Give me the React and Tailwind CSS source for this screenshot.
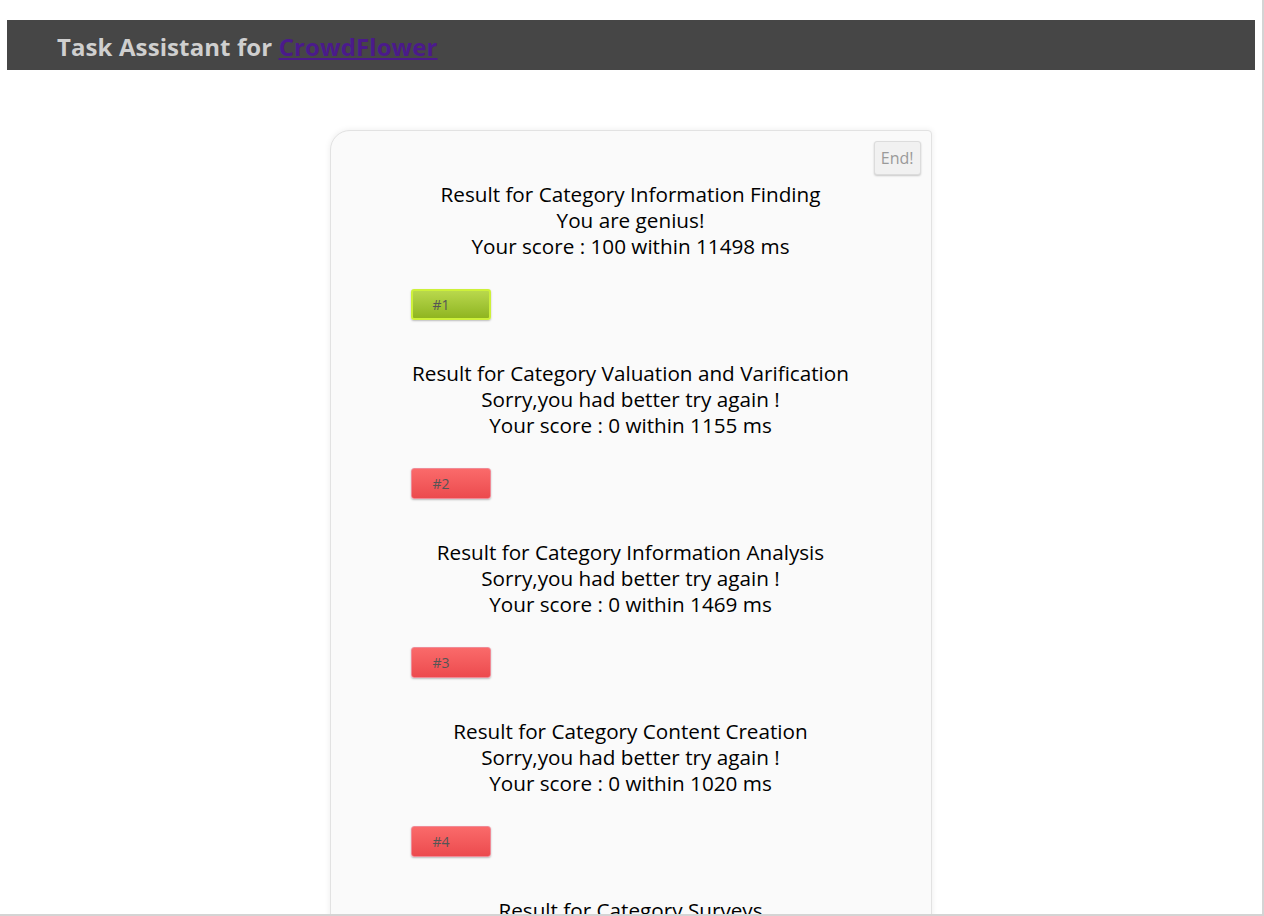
const results = [
  { category: 'Information Finding', message: 'You are genius!', score: 100, time: 11498, passed: true },
  { category: 'Valuation and Varification', message: 'Sorry,you had better try again !', score: 0, time: 1155, passed: false },
  { category: 'Information Analysis', message: 'Sorry,you had better try again !', score: 0, time: 1469, passed: false },
  { category: 'Content Creation', message: 'Sorry,you had better try again !', score: 0, time: 1020, passed: false },
  { category: 'Surveys', message: 'Sorry,you had better try again !', score: 0, time: 988, passed: false },
];

function ResultBlock({ item, index }) {
  return (
    <div className="mb-[40px]">
      <div className="text-center text-[20.7px] leading-[26px] text-black">
        <p>Result for Category {item.category}</p>
        <p>{item.message}</p>
        <p>Your score : {item.score} within {item.time} ms</p>
      </div>
      <div className="mt-[30px] pl-[80px]">
        <button
          className={
            item.passed
              ? 'w-[80px] h-[31px] rounded-[3px] border-2 border-[#cdf03a] bg-gradient-to-b from-[#b9d84c] to-[#8fb51f] text-left pl-[20px] text-[14px] text-[#555] shadow-[0_1px_2px_rgba(0,0,0,0.25)]'
              : 'w-[80px] h-[31px] rounded-[3px] border border-[#f08a96] bg-gradient-to-b from-[#fa6a6a] to-[#ec4a4e] text-left pl-[21px] text-[14px] text-[#555] shadow-[0_1px_2px_rgba(0,0,0,0.25)]'
          }
        >
          #{index + 1}
        </button>
      </div>
    </div>
  );
}

export default function App() {
  return (
    <div
      className="h-[916px] overflow-hidden bg-white border-r-2 border-b-2 border-[#d4d4d4]"
      style={{ fontFamily: '"Open Sans", "Noto Sans", sans-serif' }}
    >
      <div className="pt-[20px] px-[7px]">
        <div className="h-[50px] bg-[#464646] flex items-center pl-[50px]">
          <h1 className="mt-[3px] text-[24px] font-bold text-[#cfcfcf] tracking-[0.1px] leading-none">
            Task Assistant for{' '}
            <a href="#" className="text-[#4b1a8b] underline">CrowdFlower</a>
          </h1>
        </div>
      </div>

      <div className="mt-[60px] flex justify-center pr-[1px]">
        <div className="w-[602px] bg-[#fafafa] border border-[#e2e2e2] rounded-tl-[20px] rounded-tr-[4px] shadow-[0_0_6px_rgba(0,0,0,0.08)] pt-[10px]">
          <div className="flex justify-end pr-[10px]">
            <button className="h-[34px] px-[6px] bg-[#f1f1f1] border border-[#dcdcdc] rounded-[3px] text-[16px] text-[#9a9a9a] shadow-[0_1px_2px_rgba(0,0,0,0.2)]">
              End!
            </button>
          </div>
          <div className="mt-[6px]">
            {results.map((item, i) => (
              <ResultBlock key={i} item={item} index={i} />
            ))}
          </div>
        </div>
      </div>
    </div>
  );
}
